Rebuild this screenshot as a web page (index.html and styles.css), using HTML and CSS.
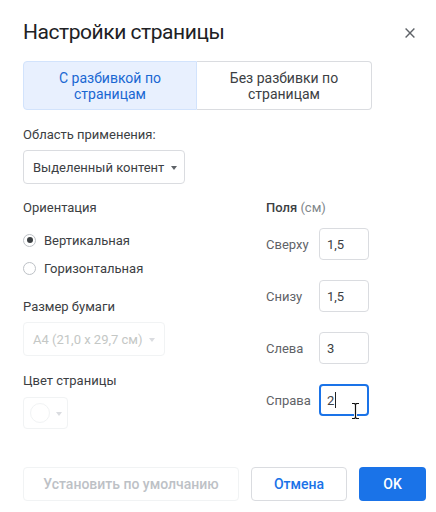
FILE: index.html
```html
<!DOCTYPE html>
<html lang="ru">
<head>
<meta charset="utf-8">
<title>Настройки страницы</title>
<link rel="stylesheet" href="styles.css">
</head>
<body>
<div class="dialog">
  <div class="header">
    <h1 class="title">Настройки страницы</h1>
    <span class="close" aria-label="Закрыть">
      <svg width="10" height="10" viewBox="0 0 10 10"><path d="M0.6 0.6L9.4 9.4M9.4 0.6L0.6 9.4" stroke="#5f6368" stroke-width="1.4" fill="none"/></svg>
    </span>
  </div>

  <div class="segmented">
    <div class="seg seg-active">С разбивкой по<br>страницам</div>
    <div class="seg">Без разбивки по<br>страницам</div>
  </div>

  <div class="label label-scope">Область применения:</div>
  <div class="select select-scope"><span>Выделенный контент</span><span class="caret"></span></div>

  <div class="columns">
    <div class="col-left">
      <div class="label">Ориентация</div>
      <div class="radios">
        <div class="radio-row"><span class="radio radio-on"></span><span>Вертикальная</span></div>
        <div class="radio-row"><span class="radio"></span><span>Горизонтальная</span></div>
      </div>
      <div class="label label-paper">Размер бумаги</div>
      <div class="select select-disabled"><span>A4 (21,0 x 29,7 см)</span><span class="caret caret-light"></span></div>
      <div class="label label-color">Цвет страницы</div>
      <div class="color-btn"><span class="swatch"></span><span class="caret caret-light"></span></div>
    </div>
    <div class="col-right">
      <div class="label"><span class="strong">Поля</span> <span class="unit">(см)</span></div>
      <div class="fields">
        <div class="field"><span class="field-label">Сверху</span><span class="input">1,5</span></div>
        <div class="field"><span class="field-label">Снизу</span><span class="input">1,5</span></div>
        <div class="field"><span class="field-label">Слева</span><span class="input">3</span></div>
        <div class="field"><span class="field-label">Справа</span><span class="input input-focus">2<span class="text-caret"></span></span></div>
      </div>
    </div>
  </div>

  <div class="footer">
    <span class="btn btn-disabled">Установить по умолчанию</span>
    <span class="btn btn-outline">Отмена</span>
    <span class="btn btn-primary">OK</span>
  </div>

  <svg class="ibeam" width="9" height="18" viewBox="0 0 9 18">
    <path d="M1 1.5h2.5l1 1 1-1H8M4.5 2.5v13M1 16.5h2.5l1-1 1 1H8" stroke="#fff" stroke-width="3" fill="none"/>
    <path d="M1 1.5h2.5l1 1 1-1H8M4.5 2.5v13M1 16.5h2.5l1-1 1 1H8" stroke="#111" stroke-width="1.2" fill="none"/>
  </svg>
</div>
</body>
</html>
```

FILE: styles.css
```css
* { box-sizing: border-box; }

html, body {
  margin: 0;
  padding: 0;
  background: #ffffff;
}

body {
  font-family: Roboto, "Liberation Sans", Arial, sans-serif;
  font-size: 13px;
  color: #3c4043;
}

.dialog {
  position: relative;
  width: 436px;
  height: 512px;
  padding: 18px 10px 0 23px;
}

.header {
  display: flex;
  align-items: center;
  height: 28px;
}

.title {
  margin: 0;
  font-size: 21px;
  font-weight: 400;
  line-height: 28px;
  letter-spacing: -0.45px;
  color: #202124;
}

.close {
  display: flex;
  margin-left: auto;
  margin-right: 11px;
  margin-top: 2px;
}

.segmented {
  display: grid;
  grid-template-columns: 174px 175px;
  width: 349px;
  height: 49px;
  margin-top: 15px;
}

.seg {
  display: flex;
  align-items: center;
  justify-content: center;
  text-align: center;
  font-size: 14px;
  line-height: 16px;
  color: #3c4043;
  border: 1px solid #dadce0;
  border-left: none;
  border-radius: 0 4px 4px 0;
  background: #fff;
}

.seg-active {
  background: #e8f0fe;
  color: #1967d2;
  border: 1px solid #d2e3fc;
  border-radius: 4px 0 0 4px;
}

.label {
  line-height: 20px;
  color: #3c4043;
  white-space: nowrap;
}

.label-scope { margin-top: 15px; }

.select {
  display: flex;
  align-items: center;
  height: 34px;
  margin-top: 5px;
  padding: 0 10px 0 9px;
  border: 1px solid #dadce0;
  border-radius: 4px;
  color: #3c4043;
  gap: 7px;
  white-space: nowrap;
}

.select-scope { width: 162px; }

.caret {
  flex: none;
  width: 0;
  height: 0;
  border-left: 3.5px solid transparent;
  border-right: 3.5px solid transparent;
  border-top: 4px solid #5f6368;
  margin-top: 1px;
}

.caret-light { border-top-color: #dadce0; }

.columns {
  display: flex;
  margin-top: 14px;
}

.col-left {
  width: 243px;
  display: flex;
  flex-direction: column;
  align-items: flex-start;
}

.radios {
  display: flex;
  flex-direction: column;
  gap: 8px;
  margin-top: 12px;
}

.radio-row {
  display: flex;
  align-items: center;
  height: 20px;
  gap: 8px;
  color: #3c4043;
}

.radio {
  width: 13px;
  height: 13px;
  border-radius: 50%;
  border: 1px solid #bdc1c6;
  display: flex;
  align-items: center;
  justify-content: center;
  flex: none;
}

.radio-on::after {
  content: "";
  width: 6px;
  height: 6px;
  border-radius: 50%;
  background: #3c4043;
}

.label-paper { margin-top: 19px; }

.select-disabled {
  width: 142px;
  color: #c4c7c5;
  border-color: #f1f3f4;
  gap: 6px;
}

.label-color { margin-top: 15px; }

.color-btn {
  display: flex;
  align-items: center;
  width: 45px;
  height: 32px;
  margin-top: 6px;
  padding-left: 6px;
  gap: 6px;
  border: 1px solid #f1f3f4;
  border-radius: 4px;
}

.swatch {
  width: 20px;
  height: 20px;
  border-radius: 50%;
  border: 1px solid #f1f3f4;
}

.col-right {
  display: flex;
  flex-direction: column;
}

.strong {
  font-weight: 500;
  color: #3c4043;
}

.unit { color: #80868b; }

.fields {
  display: flex;
  flex-direction: column;
  gap: 20px;
  margin-top: 10px;
}

.field {
  display: flex;
  align-items: center;
  height: 32px;
}

.field-label {
  width: 53px;
  color: #5f6368;
}

.input {
  display: flex;
  align-items: center;
  width: 50px;
  height: 32px;
  padding-left: 7px;
  border: 1px solid #dadce0;
  border-radius: 4px;
  color: #3c4043;
}

.input-focus {
  border: 2px solid #1a73e8;
  padding-left: 6px;
}

.text-caret {
  display: inline-block;
  width: 1px;
  height: 16px;
  background: #202124;
  margin-left: 1px;
}

.footer {
  display: flex;
  align-items: center;
  gap: 12px;
  margin-top: 38px;
}

.btn {
  display: flex;
  align-items: center;
  justify-content: center;
  height: 34px;
  border-radius: 4px;
  font-size: 14px;
  font-weight: 500;
}

.btn-disabled {
  width: 216px;
  color: #bdc1c6;
  border: 1px solid #f1f3f4;
}

.btn-outline {
  width: 96px;
  color: #1a73e8;
  border: 1px solid #dadce0;
}

.btn-primary {
  width: 67px;
  color: #fff;
  background: #1a73e8;
}

.ibeam {
  position: absolute;
  left: 351px;
  top: 402px;
}
```
